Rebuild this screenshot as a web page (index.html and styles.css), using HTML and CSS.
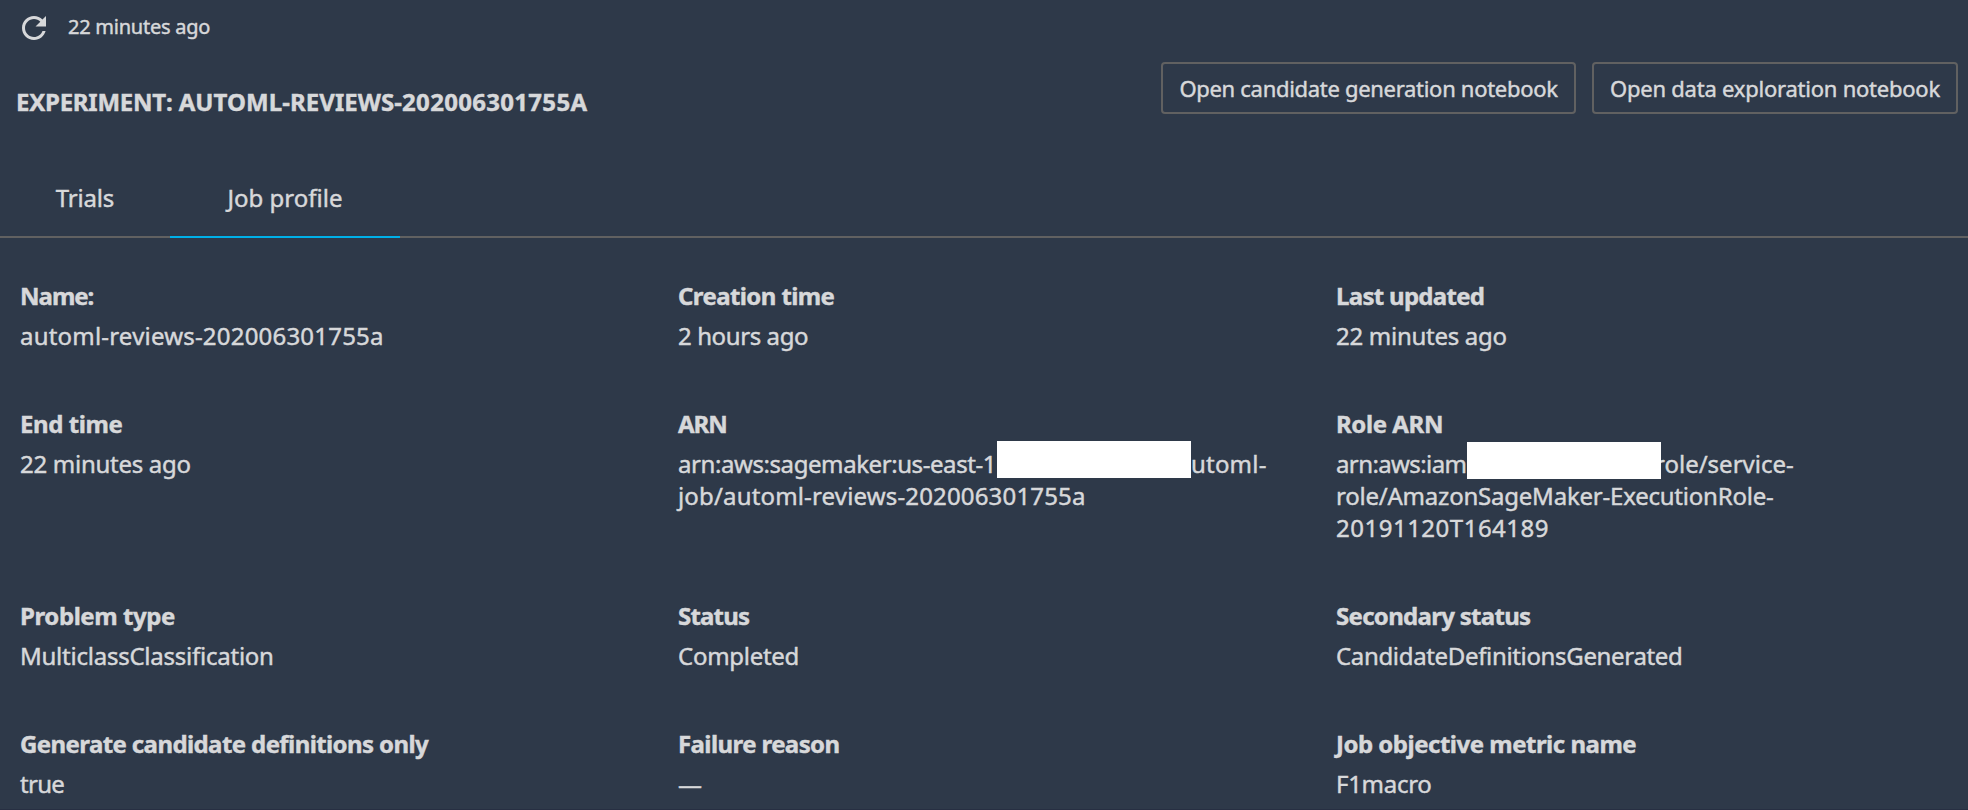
FILE: index.html
```
<!DOCTYPE html>
<html lang="en">
<head>
<meta charset="utf-8">
<title>Experiment: automl-reviews-202006301755a</title>
<link rel="stylesheet" href="styles.css">
</head>
<body>
<div class="refresh">
  <svg class="refresh-icon" viewBox="0 0 24 24" aria-hidden="true"><path d="M17.65 6.35C16.2 4.9 14.21 4 12 4c-4.42 0-7.99 3.58-7.99 8s3.57 8 7.99 8c3.73 0 6.84-2.55 7.73-6h-2.08c-.82 2.33-3.04 4-5.65 4-3.31 0-6-2.69-6-6s2.69-6 6-6c1.66 0 3.14.69 4.22 1.78L13 11h7V4l-2.35 2.35z"/></svg>
  <span class="refresh-time">22 minutes ago</span>
</div>
<header class="header">
  <h1 class="title"><span class="title-kind">EXPERIMENT:</span> AUTOML-REVIEWS-<span class="title-id">202006301755A</span></h1>
  <div class="actions">
    <button class="btn btn-candidate">Open candidate generation notebook</button>
    <button class="btn btn-data">Open data exploration notebook</button>
  </div>
</header>
<nav class="tabs">
  <a class="tab tab-trials">Trials</a>
  <a class="tab tab-profile active">Job profile</a>
</nav>
<main class="profile">
  <section class="field name"><h2>Name:</h2><p>automl-reviews-202006301755a</p></section>
  <section class="field created"><h2>Creation time</h2><p>2 hours ago</p></section>
  <section class="field updated"><h2>Last updated</h2><p>22 minutes ago</p></section>

  <section class="field ended"><h2>End time</h2><p>22 minutes ago</p></section>
  <section class="field arn"><h2>ARN</h2><p><span class="line"><span class="arn-start">arn:aws:sagemaker:us-east-1</span><span class="mask"></span><span class="arn-end">utoml-</span></span><span class="line arn-job">job/automl-reviews-202006301755a</span></p></section>
  <section class="field role"><h2>Role ARN</h2><p><span class="line"><span class="role-start">arn:aws:iam</span><span class="mask"></span><span class="role-end">role/service-</span></span><span class="line role-name">role/AmazonSageMaker-ExecutionRole-</span><span class="line role-id">20191120T164189</span></p></section>

  <section class="field problem"><h2>Problem type</h2><p>MulticlassClassification</p></section>
  <section class="field status"><h2>Status</h2><p>Completed</p></section>
  <section class="field secondary"><h2>Secondary status</h2><p>CandidateDefinitionsGenerated</p></section>

  <section class="field generate"><h2>Generate candidate definitions only</h2><p>true</p></section>
  <section class="field failure"><h2>Failure reason</h2><p>—</p></section>
  <section class="field metric"><h2>Job objective metric name</h2><p>F1macro</p></section>
</main>
</body>
</html>
```
FILE: styles.css
```
* { box-sizing: border-box; }

body {
  margin: 0;
  height: 810px;
  overflow: hidden;
  border-bottom: 1px solid #272f42;
  background: #2e3949;
  color: #d7d8da;
  font: 400 24px/32px "Noto Sans", "Open Sans", sans-serif;
  -webkit-text-stroke: 0.45px currentColor;
}

h1, h2, p { margin: 0; font-size: inherit; }

.refresh {
  display: flex;
  height: 62px;
  padding: 10px 0 0 16px;
  gap: 16px;
}
.refresh-icon { width: 36px; height: 36px; fill: currentColor; }
.refresh-time {
  padding-top: 3px;
  font-size: 20px;
  line-height: 28px;
  letter-spacing: -0.25px;
}

.header {
  display: flex;
  justify-content: space-between;
  height: 104px;
  padding: 0 10px 0 16px;
}
.title { padding-top: 24px; font-weight: 700; letter-spacing: 0.06px; }
.title-kind { letter-spacing: -0.25px; }
.title-id { letter-spacing: 0.3px; }
.actions { display: flex; gap: 16px; }
.btn {
  height: 52px;
  padding: 0;
  border: 2px solid #616161;
  border-radius: 4px;
  background: none;
  color: inherit;
  font: inherit;
  font-size: 22px;
  -webkit-text-stroke: inherit;
}
.btn-candidate { width: 415px; letter-spacing: -0.3px; }
.btn-data { width: 366px; letter-spacing: -0.23px; }

.tabs {
  display: flex;
  height: 72px;
  box-shadow: inset 0 -2px #616161;
}
.tab { padding-top: 16px; text-align: center; }
.tab.active { border-bottom: 2px solid #00b0e8; }
.tab-trials { width: 170px; letter-spacing: -0.18px; }
.tab-profile { width: 230px; }

.profile {
  display: grid;
  grid-template-columns: 658px 658px 1fr;
  row-gap: 56px;
  padding: 41.5px 0 0 20px;
  white-space: nowrap;
}
.field h2 {
  margin-bottom: 8px;
  font-weight: 700;
  letter-spacing: -0.6px;
}
.field p { letter-spacing: -0.28px; }
.line { display: flex; }
.mask {
  height: 37px;
  margin: -7px 0 -1px;
  background: #fff;
}

/* Tracking per field */
.name h2 { letter-spacing: -1px; }
.name p { letter-spacing: 0.2px; }
.created p { letter-spacing: -0.4px; }
.ended h2, .problem h2, .role h2 { letter-spacing: -0.42px; }
.arn h2 { letter-spacing: -1.1px; }
.status h2 { letter-spacing: -0.8px; }
.updated h2, .secondary h2 { letter-spacing: -0.7px; }
.problem p { letter-spacing: -0.24px; }
.secondary p { letter-spacing: -0.34px; }
.generate p { letter-spacing: -0.7px; }
.metric h2 { letter-spacing: -0.5px; }

.arn-start { width: 319px; letter-spacing: -0.42px; }
.arn .mask { width: 194px; }
.arn-end { letter-spacing: 0.2px; }
.arn-job { letter-spacing: 0.16px; }

.role-start { width: 131px; letter-spacing: -0.6px; }
.role .mask { z-index: 1; width: 194px; margin: -6px 0 -2px; }
.role-end { margin-left: -6px; letter-spacing: 0; }
.role-name { letter-spacing: -0.22px; }
.role-id { letter-spacing: 0.5px; }
```
